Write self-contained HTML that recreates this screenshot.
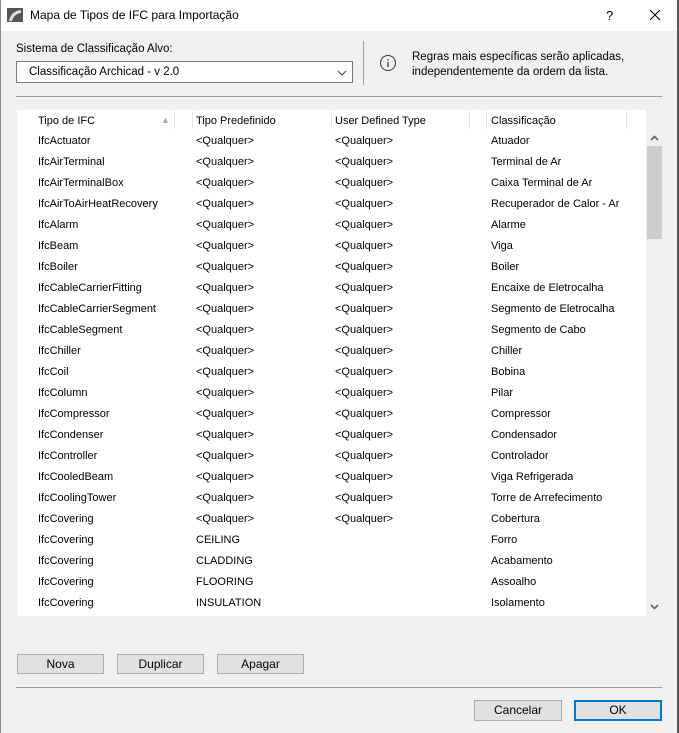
<!DOCTYPE html><html><head><style>
body{margin:0;width:679px;height:733px;background:#f0f0f0;font-family:"Liberation Sans",sans-serif;font-size:11px;color:#000;position:relative;overflow:hidden}
.a{position:absolute}
.t{position:absolute;white-space:nowrap;font-size:11px}
.btn{position:absolute;background:#e1e1e1;border:1px solid #adadad;box-sizing:border-box;text-align:center;line-height:18px;font-size:12px}
</style></head><body>
<div class="a" style="left:0;top:0;width:679px;height:31px;background:#fff"></div>
<svg class="a" style="left:7px;top:8px" width="16" height="14"><rect width="16" height="14" fill="#555"/><path d="M2 13 Q4 3 14 2 L14 5 Q7 6 5 13Z" fill="#ddd"/></svg>
<div class="t" style="left:30px;top:8px;font-size:12px">Mapa de Tipos de IFC para Importação</div>
<div class="t" style="left:606px;top:8px;font-size:13px">?</div>
<svg class="a" style="left:649px;top:9px" width="12" height="12"><path d="M1 1L11 11M11 1L1 11" stroke="#000" stroke-width="1"/></svg>
<div class="a" style="left:677px;top:0;width:2px;height:733px;background:#555"></div>
<div class="a" style="left:0;top:0;width:1px;height:733px;background:#888"></div>
<div class="t" style="left:16px;top:43px;font-size:11.5px">Sistema de Classificação Alvo:</div>
<div class="a" style="left:16px;top:61px;width:337px;height:22px;background:#fff;border:1px solid #7a7a7a;box-sizing:border-box"></div>
<div class="t" style="left:29px;top:66px;font-size:11.5px">Classificação Archicad - v 2.0</div>
<svg class="a" style="left:337px;top:70px" width="10" height="6"><path d="M1 1L5 5L9 1" stroke="#444" fill="none"/></svg>
<div class="a" style="left:363px;top:41px;width:1px;height:44px;background:#a0a0a0"></div>
<svg class="a" style="left:379px;top:54px" width="18" height="18"><circle cx="9" cy="9" r="7.5" stroke="#333" fill="none"/><rect x="8.4" y="8" width="1.3" height="5" fill="#333"/><rect x="8.4" y="5" width="1.3" height="1.4" fill="#333"/></svg>
<div class="t" style="left:412px;top:50px;font-size:11.5px;line-height:15px">Regras mais específicas serão aplicadas,<br>independentemente da ordem da lista.</div>
<div class="a" style="left:16px;top:96px;width:646px;height:1px;background:#a0a0a0"></div>
<div class="a" style="left:17px;top:110px;width:629px;height:506px;background:#fff"></div>
<div class="a" style="left:174px;top:111px;width:1px;height:18px;background:#e5e5e5"></div>
<div class="a" style="left:192px;top:111px;width:1px;height:18px;background:#e5e5e5"></div>
<div class="a" style="left:331px;top:111px;width:1px;height:18px;background:#e5e5e5"></div>
<div class="a" style="left:469px;top:111px;width:1px;height:18px;background:#e5e5e5"></div>
<div class="a" style="left:486px;top:111px;width:1px;height:18px;background:#e5e5e5"></div>
<div class="a" style="left:626px;top:111px;width:1px;height:18px;background:#e5e5e5"></div>
<div class="t" style="left:38px;top:115px">Tipo de IFC</div>
<div class="t" style="left:161px;top:115px;font-size:9px;color:#aaa">▲</div>
<div class="t" style="left:196px;top:115px">Tipo Predefinido</div>
<div class="t" style="left:335px;top:115px">User Defined Type</div>
<div class="t" style="left:491px;top:115px">Classificação</div>
<div class="a" style="left:646px;top:130px;width:16px;height:486px;background:#f0f0f0"></div>
<div class="a" style="left:647px;top:146px;width:15px;height:93px;background:#cdcdcd"></div>
<svg class="a" style="left:650px;top:135px" width="9" height="6"><path d="M1 5L4.5 1.5L8 5" stroke="#606060" stroke-width="1.6" fill="none"/></svg>
<svg class="a" style="left:650px;top:604px" width="9" height="6"><path d="M1 1L4.5 4.5L8 1" stroke="#606060" stroke-width="1.6" fill="none"/></svg>
<div id="rows"></div>
<div class="btn" style="left:17px;top:654px;width:87px;height:20px">Nova</div>
<div class="btn" style="left:117px;top:654px;width:87px;height:20px">Duplicar</div>
<div class="btn" style="left:217px;top:654px;width:87px;height:20px">Apagar</div>
<div class="a" style="left:16px;top:687px;width:646px;height:1px;background:#a0a0a0"></div>
<div class="btn" style="left:474px;top:700px;width:88px;height:21px;line-height:19px">Cancelar</div>
<div class="btn" style="left:574px;top:700px;width:88px;height:21px;line-height:17px;border:2px solid #0078d7">OK</div>
<script>
var d=[["IfcActuator","<Qualquer>","<Qualquer>","Atuador"],["IfcAirTerminal","<Qualquer>","<Qualquer>","Terminal de Ar"],["IfcAirTerminalBox","<Qualquer>","<Qualquer>","Caixa Terminal de Ar"],["IfcAirToAirHeatRecovery","<Qualquer>","<Qualquer>","Recuperador de Calor - Ar"],["IfcAlarm","<Qualquer>","<Qualquer>","Alarme"],["IfcBeam","<Qualquer>","<Qualquer>","Viga"],["IfcBoiler","<Qualquer>","<Qualquer>","Boiler"],["IfcCableCarrierFitting","<Qualquer>","<Qualquer>","Encaixe de Eletrocalha"],["IfcCableCarrierSegment","<Qualquer>","<Qualquer>","Segmento de Eletrocalha"],["IfcCableSegment","<Qualquer>","<Qualquer>","Segmento de Cabo"],["IfcChiller","<Qualquer>","<Qualquer>","Chiller"],["IfcCoil","<Qualquer>","<Qualquer>","Bobina"],["IfcColumn","<Qualquer>","<Qualquer>","Pilar"],["IfcCompressor","<Qualquer>","<Qualquer>","Compressor"],["IfcCondenser","<Qualquer>","<Qualquer>","Condensador"],["IfcController","<Qualquer>","<Qualquer>","Controlador"],["IfcCooledBeam","<Qualquer>","<Qualquer>","Viga Refrigerada"],["IfcCoolingTower","<Qualquer>","<Qualquer>","Torre de Arrefecimento"],["IfcCovering","<Qualquer>","<Qualquer>","Cobertura"],["IfcCovering","CEILING","","Forro"],["IfcCovering","CLADDING","","Acabamento"],["IfcCovering","FLOORING","","Assoalho"],["IfcCovering","INSULATION","","Isolamento"]];
var x=[38,196,335,491],h="";
d.forEach(function(r,i){r.forEach(function(c,j){var w=j==3?"max-width:134px;overflow:hidden;":"";h+='<div class="t" style="'+w+'left:'+x[j]+'px;top:'+(135+21*i)+'px">'+c.replace(/</g,"&lt;").replace(/>/g,"&gt;")+'</div>';});});
document.getElementById("rows").innerHTML=h;
</script>
</body></html>
